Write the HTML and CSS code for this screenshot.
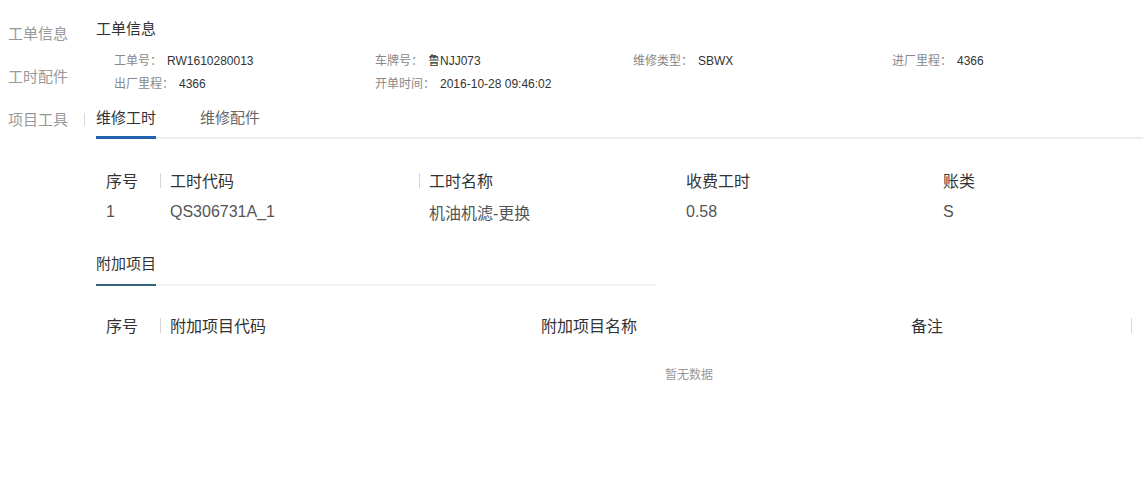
FILE: index.html
```html
<!DOCTYPE html>
<html lang="zh-CN">
<head>
    <meta charset="UTF-8">
    <meta name="viewport" content="width=device-width, initial-scale=1.0">
    <title>工单信息</title>
    <link rel="stylesheet" href="styles.css">
</head>
<body>
    <div class="page">
        <!-- 左侧导航 -->
        <ul class="side-nav">
            <li>工单信息</li>
            <li>工时配件</li>
            <li class="divider">项目工具</li>
        </ul>

        <div class="main">
            <h2 class="title">工单信息</h2>

            <div class="info-grid">
                <div class="info"><span class="label">工单号：</span><span class="value">RW1610280013</span></div>
                <div class="info"><span class="label">车牌号：</span><span class="value">鲁NJJ073</span></div>
                <div class="info"><span class="label">维修类型：</span><span class="value">SBWX</span></div>
                <div class="info"><span class="label">进厂里程：</span><span class="value">4366</span></div>
                <div class="info"><span class="label">出厂里程：</span><span class="value">4366</span></div>
                <div class="info"><span class="label">开单时间：</span><span class="value">2016-10-28 09:46:02</span></div>
            </div>

            <div class="tabs">
                <span class="tab active">维修工时</span>
                <span class="tab">维修配件</span>
            </div>

            <table class="grid">
                <colgroup>
                    <col style="width:64px"><col style="width:259px"><col style="width:257px"><col style="width:257px"><col>
                </colgroup>
                <thead>
                    <tr>
                        <th>序号</th>
                        <th class="sep">工时代码</th>
                        <th class="sep">工时名称</th>
                        <th>收费工时</th>
                        <th>账类</th>
                    </tr>
                </thead>
                <tbody>
                    <tr>
                        <td>1</td>
                        <td>QS306731A_1</td>
                        <td>机油机滤-更换</td>
                        <td>0.58</td>
                        <td>S</td>
                    </tr>
                </tbody>
            </table>

            <div class="section">
                <span class="section-title">附加项目</span>
            </div>

            <table class="grid extra">
                <colgroup>
                    <col style="width:64px"><col style="width:371px"><col style="width:370px"><col style="width:230px"><col>
                </colgroup>
                <thead>
                    <tr>
                        <th>序号</th>
                        <th class="sep">附加项目代码</th>
                        <th>附加项目名称</th>
                        <th>备注</th>
                        <th class="sep"></th>
                    </tr>
                </thead>
            </table>
            <div class="empty">暂无数据</div>
        </div>
    </div>
</body>
</html>
```
FILE: styles.css
```css
/* base */
body {
    margin: 0;
    font-family: "Liberation Sans", "Noto Sans CJK SC", sans-serif;
    color: #333;
    background: #fff;
}

.page {
    display: flex;
}

/* left nav */
.side-nav {
    list-style: none;
    margin: 0;
    padding: 12px 0 0 0;
    width: 96px;
    flex-shrink: 0;
}

.side-nav li {
    height: 43px;
    line-height: 43px;
    padding-left: 8px;
    font-size: 15px;
    color: #999;
}

.side-nav li.divider {
    background: linear-gradient(#d8d8d8, #d8d8d8) 84px center / 1px 13px no-repeat;
}

.main {
    flex: 1;
    min-width: 0;
}

.title {
    margin: 19px 0 0 0;
    font-size: 15px;
    font-weight: normal;
    line-height: 20px;
    color: #333;
}

/* info */
.info-grid {
    display: grid;
    grid-template-columns: 261px 258px 259px auto;
    padding-left: 18px;
    margin-top: 11px;
}

.info {
    line-height: 23px;
    font-size: 12px;
}

.info .label {
    color: #888;
    margin-right: 5px;
}

.info .value {
    color: #333;
}

/* tabs */
.tabs {
    display: flex;
    padding-top: 12px;
    border-bottom: 2px solid #ececec;
}

.tab {
    font-size: 15px;
    line-height: 20px;
    padding-bottom: 8px;
    margin-right: 44px;
    margin-bottom: -2px;
    color: #666;
    border-bottom: 3px solid transparent;
}

.tab.active {
    color: #333;
    border-bottom-color: #1f62ad;
}

/* tables */
.grid {
    width: 100%;
    border-collapse: collapse;
    table-layout: fixed;
    margin-top: 25px;
    font-size: 16px;
}

.grid th,
.grid td {
    height: 32px;
    padding: 0 0 0 10px;
    text-align: left;
    white-space: nowrap;
}

.grid th {
    font-weight: normal;
    color: #333;
}

.grid td {
    color: #555;
}

.grid th.sep {
    background: linear-gradient(#d6d6d6, #d6d6d6) left center / 1px 15px no-repeat;
}

.section {
    margin-top: 26px;
    width: 560px;
    border-bottom: 2px solid #f1f3f4;
    display: flex;
}

.section-title {
    font-size: 15px;
    line-height: 20px;
    padding-bottom: 10px;
    margin-bottom: -2px;
    border-bottom: 2px solid #33627c;
}

.grid.extra {
    margin-top: 23px;
}

.empty {
    padding: 24px 0 0 569px;
    font-size: 12px;
    line-height: 20px;
    color: #999;
}
```
